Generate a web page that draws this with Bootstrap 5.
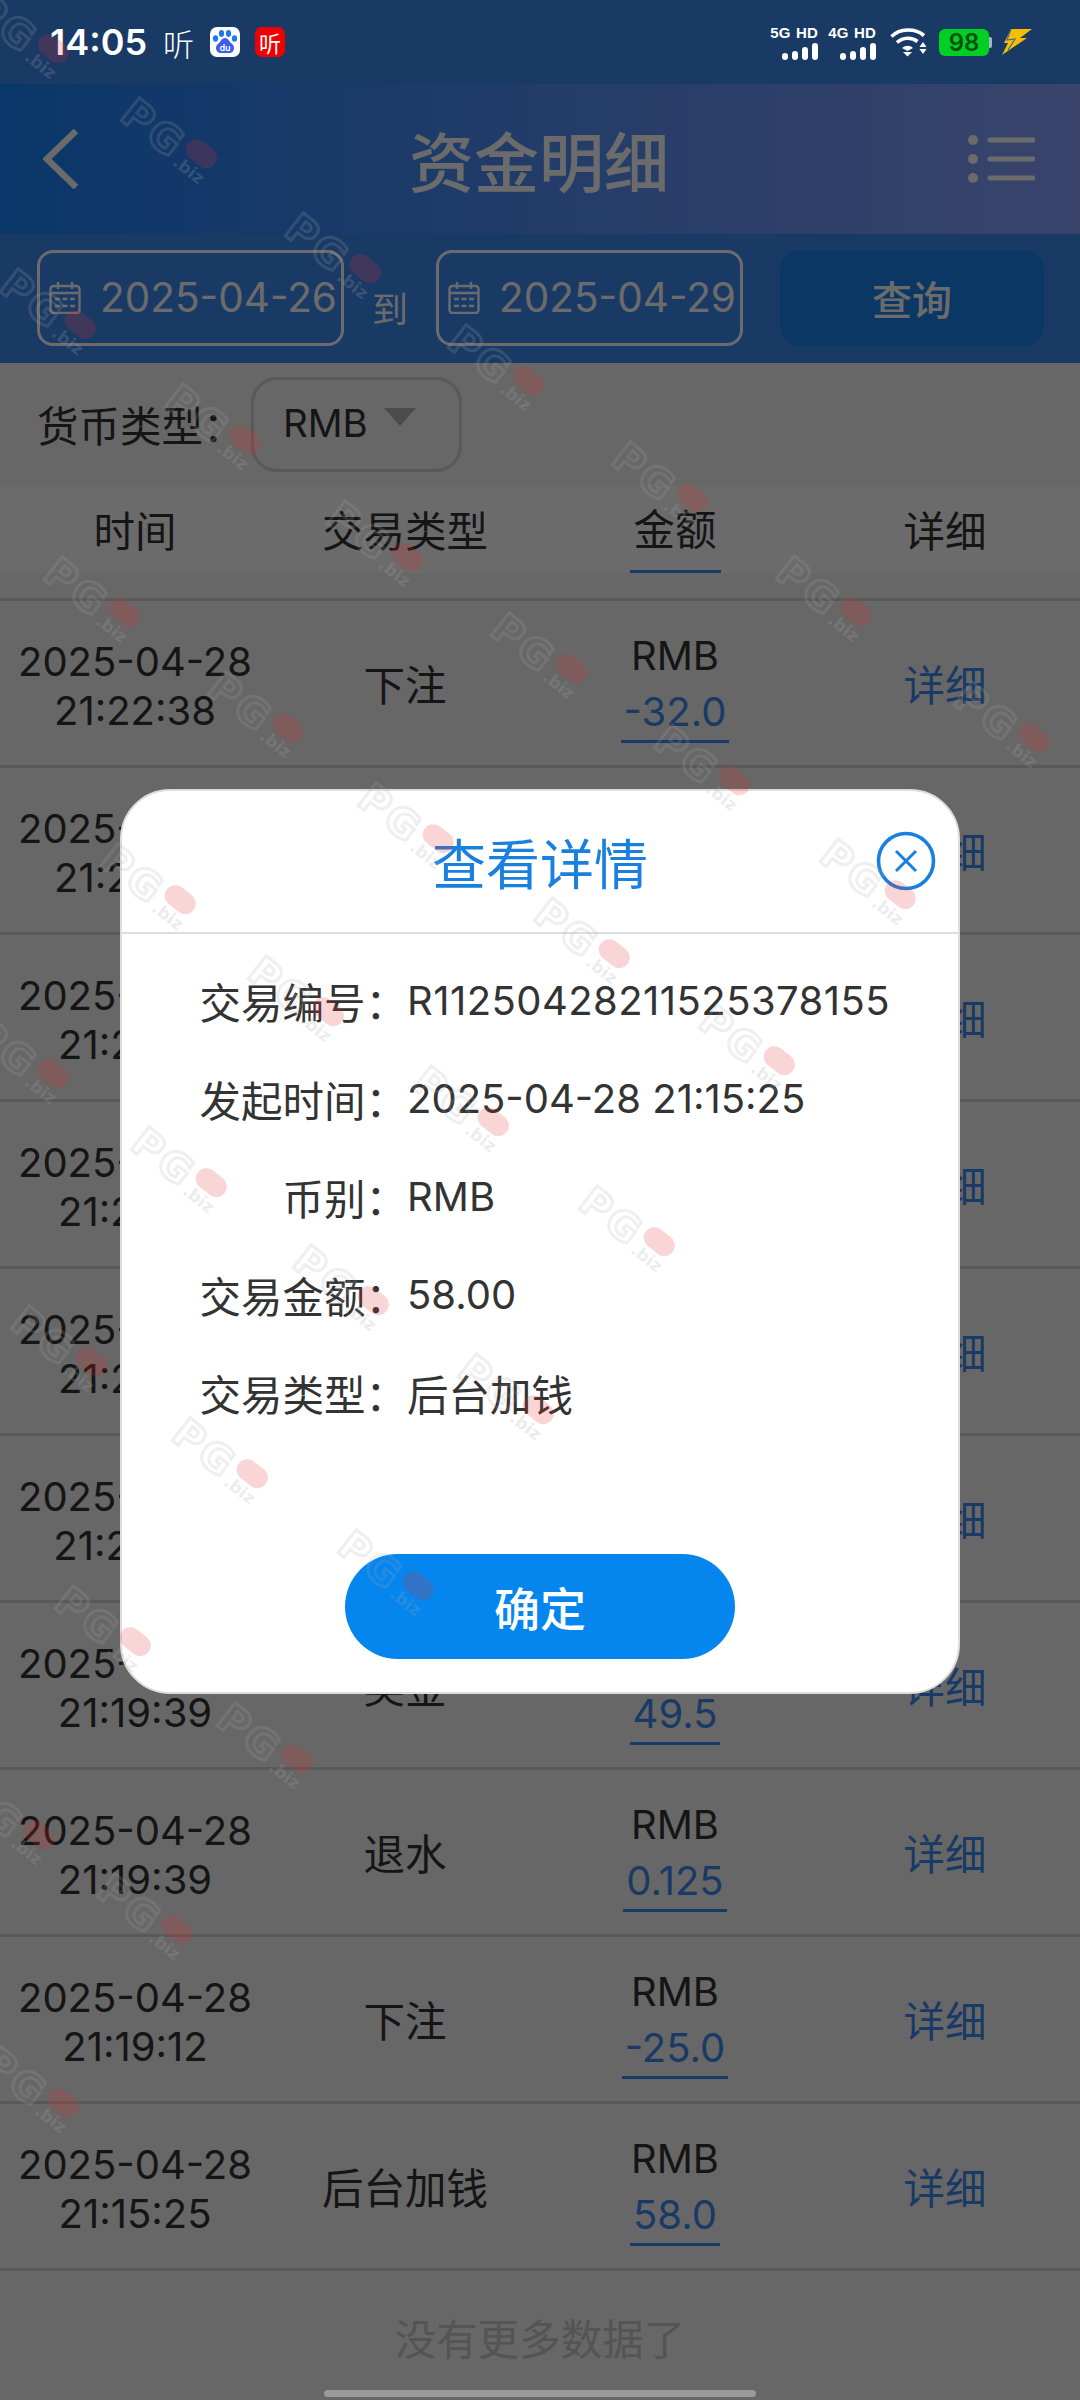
<!DOCTYPE html>
<html lang="zh-CN">
<head>
<meta charset="UTF-8">
<meta name="viewport" content="width=device-width, initial-scale=1.0">
<title>资金明细</title>
<link href="https://cdn.jsdelivr.net/npm/bootstrap@5.3.0/dist/css/bootstrap.min.css" rel="stylesheet">
<style>
    body { width: 1080px; height: 2400px; overflow: hidden; background: #f5f5f5; color: #333; font-family: "Noto Sans CJK SC", sans-serif; font-size: 41.5px; }
    .num { font-family: Inter, "Noto Sans CJK SC", sans-serif; font-size: 40px; }
    .page { height: 2400px; overflow: hidden; }

    .sbar { height: 84px; background: #3e8af3; padding: 0 48px 0 50px; }
    .sbar-in { position: relative; z-index: 1060; color: #fff; }
    .clock { font-family: Inter, sans-serif; font-size: 36px; font-weight: 600; line-height: 1; }
    .ting { font-size: 31px; font-weight: 300; line-height: 1; }
    .ting-red { width: 30px; height: 30px; margin-left: 15px; border-radius: 7px; background: #f00000; font-size: 22px; line-height: 30px; text-align: center; }
    .net-lab { font-family: "Liberation Sans", sans-serif; font-size: 15px; font-weight: 700; line-height: 15px; white-space: nowrap; word-spacing: 1px; letter-spacing: .2px; }
    .net-bars { display: block; margin: 3px 0 0 auto; }
    .batt { width: 50px; height: 27px; margin-left: 12px; background: #00d024; border-radius: 6px; color: #05500f; font-family: Inter, sans-serif; font-size: 24px; font-weight: 600; line-height: 27px; text-align: center; }
    .batt-nub { width: 3px; height: 11px; background: #a9b4c6; border-radius: 0 2px 2px 0; }

    .topbar { height: 150px; background: linear-gradient(90deg, #1883fa 0%, #538ffa 50%, #8aa2ff 100%); padding: 0 45px 0 43px; color: #fff; }
    .topbar h1 { font-size: 65px; font-weight: 500; margin: 0; line-height: 1; }
    .side { flex: 1 1 0; }
    .datebar { height: 129px; background: #3e8af3; padding: 16px 36px 0 37px; color: #fff; }
    .date-box { width: 307px; height: 96px; border: 3px solid #fff; border-radius: 16px; padding-left: 9px; gap: 19px; }
    .date-box .num { font-size: 40.5px; }
    .to-lab { width: 92px; text-align: center; font-size: 36px; }
    .query-btn { width: 264px; height: 96px; margin-left: auto; background: #1883ee; color: #fff; border: 0; border-radius: 20px; font-size: 40px; font-weight: 500; }

    .filter { height: 122px; padding-left: 37px; }
    .cur-lab { width: 214px; }
    .cur-sel { width: 211px; height: 95px; border: 3px solid #d5d5d5; border-radius: 26px; padding-left: 29px; }
    .cur-sel .num { font-size: 38.5px; }
    .tri { width: 0; height: 0; border-left: 16px solid transparent; border-right: 16px solid transparent; border-top: 18px solid #b5b5b5; margin-left: 16px; margin-top: -14px; }

    .thead-wrap { height: 116px; border-bottom: 3px solid #d5d5d5; }
    .thead-band { height: 88px; background: #fff; }
    .th-cur { width: 91px; height: 100%; border-bottom: 3px solid #3e8af3; }
    .row-item { height: 167px; border-bottom: 3px solid #d5d5d5; }
    .row-item .stamp { line-height: 49px; padding-top: 5px; }
    .row-item .amt { line-height: 56px; padding-top: 4px; }
    .amt-val { display: inline-block; color: #3e8af3; border-bottom: 3px solid #3e8af3; padding: 0 3px; }
    .detail-lnk { color: #3e8af3; text-decoration: none; }
    .no-more { color: #c8c8c8; line-height: 50px; margin-top: 41px; }

    .backdrop-layer { position: absolute; inset: 0; background: rgba(0, 0, 0, .58); padding-top: 789px; z-index: 1050; }
    .sheet { width: 840px; height: 905px; background: #fff; border: 2px solid #ddd; border-radius: 50px; color: #333; }
    .sheet .modal-header { height: 143px; padding: 0; border-bottom: 2px solid #ddd; position: relative; }
    .sheet-title { font-size: 54px; color: #1a80e0; margin: 0; line-height: 1; font-weight: 400; }
    .close-ico { position: absolute; left: 754px; top: 40px; background: none; border: 0; padding: 0; line-height: 0; }
    .sheet .modal-body { padding: 18px 0 0 77px; flex: none; }
    .info-line { height: 98px; }
    .info-lab { width: 208px; text-align: right; }
    .trade-no { letter-spacing: .45px; }
    .sheet .modal-footer { border: 0; padding: 0; margin-top: auto; height: 138px; align-items: flex-start; justify-content: center; }
    .ok-btn { width: 390px; height: 105px; margin: 0; border-radius: 53px; border: 0; background: #0585ee; color: #fff; font-size: 46px; font-weight: 500; }

    .home-pill { position: absolute; left: 324px; top: 2390px; width: 432px; height: 7px; border-radius: 4px; background: #9a9a9a; z-index: 1060; }

    /* PG.biz screen marks, placed by the script below */
    .wm { position: absolute; width: 110px; height: 50px; transform: rotate(38deg); z-index: 1070; pointer-events: none; }
    .wm-pg { position: absolute; left: 0; top: 3px; font-family: "DejaVu Sans", sans-serif; font-size: 40px; font-weight: 700; line-height: 40px; color: transparent; -webkit-text-stroke: 3px rgba(170, 170, 170, .2); letter-spacing: 3px; }
    .wm-pill { position: absolute; left: 70px; top: 3px; width: 34px; height: 21px; border-radius: 11px; background: rgba(225, 45, 45, .2); }
    .wm-biz { position: absolute; left: 70px; top: 26px; font-family: "DejaVu Sans", sans-serif; font-size: 17px; font-weight: 700; line-height: 17px; color: rgba(170, 170, 170, .22); }
</style>
</head>
<body>
<div class="page position-relative">
    <div class="sbar d-flex align-items-center">
        <div class="sbar-in d-flex align-items-center w-100">
            <span class="clock">14:05</span>
            <span class="ting ms-3">听</span>
            <!-- baidu paw -->
            <svg class="ms-3" width="30" height="30" viewBox="0 0 30 30">
                <rect width="30" height="30" rx="7" fill="#fff"/>
                <g fill="#1a78f0">
                    <ellipse cx="5.500" cy="11.500" rx="2.600" ry="3.200"/>
                    <ellipse cx="11.500" cy="6.500" rx="2.600" ry="3.400"/>
                    <ellipse cx="18.500" cy="6.500" rx="2.600" ry="3.400"/>
                    <ellipse cx="24.500" cy="11.500" rx="2.600" ry="3.200"/>
                </g>
                <path d="M15 11c-3 0-4 3-6 5-2 1.500-3 3-3 5 0 3 2.500 5 5 5h8c3 0 5-2 5-5 0-2-1-3.500-3-5-2-2-3-5-6-5z" fill="#3b5ef0"/>
                <text x="15" y="23.500" font-size="9" font-family="Inter, sans-serif" font-weight="600" fill="#fff" text-anchor="middle">du</text>
            </svg>
            <span class="ting-red">听</span>

            <div class="d-flex align-items-center ms-auto">
                <div>
                    <div class="net-lab">5G HD</div>
                    <svg class="net-bars" width="36" height="17" viewBox="0 0 36 17"><g fill="#fff"><rect x="0" y="10" width="6" height="7" rx="3"/><rect x="10" y="8" width="6" height="9" rx="3"/><rect x="20" y="4" width="6" height="13" rx="3"/><rect x="30" y="0" width="6" height="17" rx="3"/></g></svg>
                </div>
                <div style="margin-left:10px">
                    <div class="net-lab">4G HD</div>
                    <svg class="net-bars" width="36" height="17" viewBox="0 0 36 17"><g fill="#fff"><rect x="0" y="10" width="6" height="7" rx="3"/><rect x="10" y="8" width="6" height="9" rx="3"/><rect x="20" y="4" width="6" height="13" rx="3"/><rect x="30" y="0" width="6" height="17" rx="3"/></g></svg>
                </div>
                <svg style="margin-left:14px" width="37" height="30" viewBox="0 0 37 30">
                    <g fill="none" stroke="#fff" stroke-width="3.600">
                        <path d="M1.500 9.500C10 1 25 1 34 8.500"/>
                        <path d="M7 15.500c6-5.500 15-5.500 20.500-1"/>
                    </g>
                    <path d="M12 21c3.500-3 8-3 11 0l-5.500 3z" fill="#fff"/>
                    <path d="M13 25h9l-4.500 4.500z" fill="#fff"/>
                    <path d="M33 15l3.500 5h-7z M29.500 22h7L33 27z" fill="#fff"/>
                </svg>
                <div class="batt">98</div>
                <span class="batt-nub"></span>
                <svg style="margin-left:10px" width="30" height="26" viewBox="0 0 30 26">
                    <path d="M9 0H30L18 9h7L0 26 6 14H2z" fill="#f6be00"/>
                    <path d="M9 0 5 11l8-1-7 11" fill="none" stroke="#3e6a9a" stroke-width="1.200"/>
                </svg>
            </div>
        </div>
    </div>

    <div class="topbar d-flex align-items-center">
        <div class="side">
            <svg class="d-block" width="36" height="60" viewBox="0 0 36 60"><path d="M33 2 4 30l29 28" fill="none" stroke="#fff" stroke-width="6.500"/></svg>
        </div>
        <h1>资金明细</h1>
        <div class="side d-flex justify-content-end">
            <svg class="d-block" width="67" height="50" viewBox="0 0 67 50">
                <g fill="#fff"><circle cx="5" cy="6" r="5"/><circle cx="5" cy="25" r="5"/><circle cx="5" cy="44" r="5"/></g>
                <g stroke="#fff" stroke-width="5" stroke-linecap="round"><path d="M22 6h43M22 25h43M22 44h43"/></g>
            </svg>
        </div>
    </div>

    <div class="datebar d-flex align-items-start">
        <div class="date-box d-flex align-items-center">
            <svg width="32" height="32" viewBox="0 0 32 32"><g fill="none" stroke="#fff" stroke-width="2.400"><rect x="1.500" y="4" width="29" height="27" rx="3"/><path d="M1.500 11h29M9 0v7M23 0v7"/></g><g stroke="#fff" stroke-width="2.400" stroke-dasharray="5 2.500"><path d="M6 17h21M6 24h21"/></g></svg>
            <span class="num">2025-04-26</span>
        </div>
        <span class="to-lab align-self-center">到</span>
        <div class="date-box d-flex align-items-center">
            <svg width="32" height="32" viewBox="0 0 32 32"><g fill="none" stroke="#fff" stroke-width="2.400"><rect x="1.500" y="4" width="29" height="27" rx="3"/><path d="M1.500 11h29M9 0v7M23 0v7"/></g><g stroke="#fff" stroke-width="2.400" stroke-dasharray="5 2.500"><path d="M6 17h21M6 24h21"/></g></svg>
            <span class="num">2025-04-29</span>
        </div>
        <button class="btn query-btn">查询</button>
    </div>

    <div class="filter d-flex align-items-center">
        <span class="cur-lab">货币类型：</span>
        <div class="cur-sel d-flex align-items-center">
            <span class="num">RMB</span><span class="tri"></span>
        </div>
    </div>

    <div class="thead-wrap">
        <div class="thead-band row g-0 text-center align-items-center">
            <div class="col-3">时间</div>
            <div class="col-3">交易类型</div>
            <div class="col-3 h-100 d-flex justify-content-center"><div class="th-cur d-flex align-items-center justify-content-center text-nowrap">金额</div></div>
            <div class="col-3">详细</div>
        </div>
    </div>

    <div id="rows"></div>
    <div class="no-more text-center">没有更多数据了</div>

    <div class="backdrop-layer d-flex justify-content-center align-items-start">
        <div class="modal-content sheet">
            <div class="modal-header justify-content-center">
                <h5 class="sheet-title">查看详情</h5>
                <button class="close-ico" aria-label="关闭">
                    <svg width="60" height="60" viewBox="0 0 60 60"><circle cx="30" cy="30" r="27.500" fill="none" stroke="#1a80e0" stroke-width="3.600"/><path d="M20 20 40 40M40 20 20 40" stroke="#1a80e0" stroke-width="3"/></svg>
                </button>
            </div>
            <div class="modal-body">
                <div class="info-line d-flex align-items-center"><span class="info-lab">交易编号：</span><span class="num trade-no">R11250428211525378155</span></div>
                <div class="info-line d-flex align-items-center"><span class="info-lab">发起时间：</span><span class="num">2025-04-28 21:15:25</span></div>
                <div class="info-line d-flex align-items-center"><span class="info-lab">币别：</span><span class="num">RMB</span></div>
                <div class="info-line d-flex align-items-center"><span class="info-lab">交易金额：</span><span class="num">58.00</span></div>
                <div class="info-line d-flex align-items-center"><span class="info-lab">交易类型：</span><span>后台加钱</span></div>
            </div>
            <div class="modal-footer">
                <button class="btn ok-btn">确定</button>
            </div>
        </div>
    </div>

    <div class="home-pill"></div>
</div>

<script src="https://cdn.jsdelivr.net/npm/bootstrap@5.3.0/dist/js/bootstrap.bundle.min.js"></script>
<script>
    // Ledger rows
    const records = [
        ["21:22:38", "下注", "-32.0"],
        ["21:22:38", "退水", "0.160"],
        ["21:22:10", "奖金", "28.0"],
        ["21:22:10", "下注", "-30.0"],
        ["21:21:05", "退水", "0.100"],
        ["21:20:30", "下注", "-20.0"],
        ["21:19:39", "奖金", "49.5"],
        ["21:19:39", "退水", "0.125"],
        ["21:19:12", "下注", "-25.0"],
        ["21:15:25", "后台加钱", "58.0"]
    ];
    const rows = document.getElementById("rows");
    records.forEach(r => {
        rows.innerHTML += `
            <div class="row-item row g-0 text-center align-items-center">
                <div class="col-3 num stamp">2025-04-28<br>${r[0]}</div>
                <div class="col-3">${r[1]}</div>
                <div class="col-3 num amt">RMB<br><span class="amt-val">${r[2]}</span></div>
                <div class="col-3"><a class="detail-lnk" href="#">详细</a></div>
            </div>`;
    });

    // Screen marks, centre points
    const marks = [
        [21, 38], [169, 143], [333, 258], [48, 314], [496, 370], [213, 429], [660, 487],
        [375, 546], [92, 602], [824, 601], [539, 658], [256, 717], [1002, 727], [702, 770],
        [406, 828], [148, 889], [868, 884], [582, 943], [296, 1001], [747, 1050], [21, 1063],
        [461, 1111], [179, 1172], [627, 1231], [341, 1290], [59, 1351], [506, 1399],
        [220, 1463], [386, 1575], [103, 1631], [265, 1748], [7, 1824], [145, 1919], [31, 2092]
    ];
    const page = document.querySelector(".page");
    marks.forEach(([x, y]) => {
        const m = document.createElement("div");
        m.className = "wm";
        m.style.left = (x - 55) + "px";
        m.style.top = (y - 25) + "px";
        m.innerHTML = '<span class="wm-pg">PG</span><span class="wm-pill"></span><span class="wm-biz">.biz</span>';
        page.appendChild(m);
    });
</script>
</body>
</html>
